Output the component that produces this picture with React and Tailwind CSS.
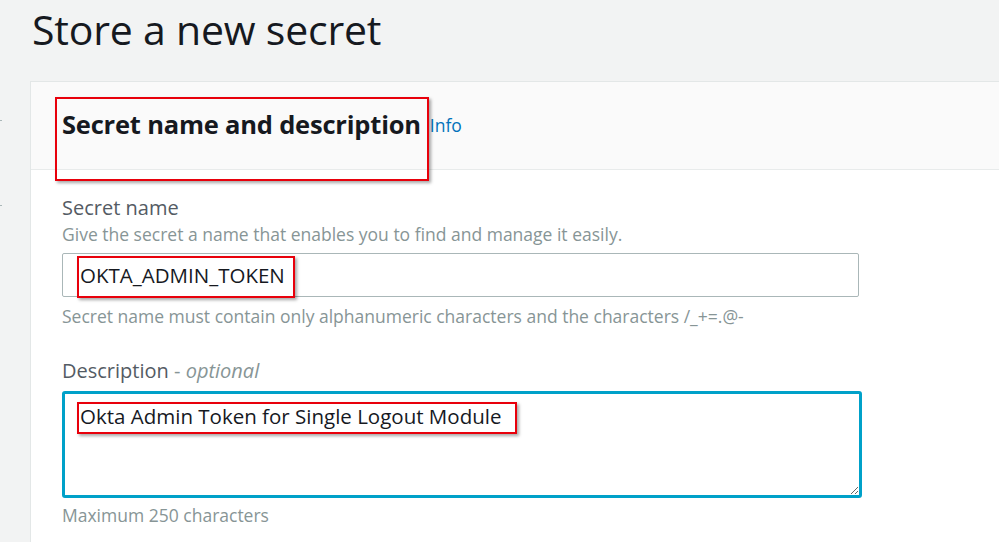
export default function App() {
  const font = { fontFamily: '"Open Sans", "Noto Sans", sans-serif' };
  const redBox = "absolute border-2 border-[#e8000b] shadow-[2px_2px_3px_rgba(0,0,0,0.35)] pointer-events-none";
  return (
    <div className="relative w-[999px] h-[542px] overflow-hidden bg-[#f2f3f3]" style={font}>
      <div className="absolute left-0 top-[120px] w-[2px] h-[1px] bg-[#aab7b8]" />
      <div className="absolute left-0 top-[205px] w-[2px] h-[1px] bg-[#aab7b8]" />

      <h1 className="pl-[32px] pt-[5px] h-[81px] text-[41px] leading-[48px] text-[#16191f] font-normal tracking-[-0.2px]">
        Store a new secret
      </h1>

      <div className="ml-[30px] w-[1000px] h-[470px] bg-white border-l border-t border-[#e3e7e7]">
        <div className="relative h-[88px] bg-[#fafafa] border-b border-[#e8ebeb] flex items-center pl-[31px] pb-[4px]">
          <h2 className="text-[25.5px] leading-[32px] font-bold text-[#16191f] tracking-[-0.2px]">
            Secret name and description
          </h2>
          <a className="ml-[9px] mt-[3px] text-[17.5px] leading-[24px] text-[#0073bb]">Info</a>
          <div className={`${redBox} left-[24px] top-[15px] w-[374px] h-[84px]`} />
        </div>

        <div className="pl-[31px] pt-[25px]">
          <div className="text-[20px] leading-[26px] text-[#545b64]">Secret name</div>
          <div className="mt-[1px] text-[17.5px] leading-[24px] text-[#879596]">
            Give the secret a name that enables you to find and manage it easily.
          </div>
          <div className="relative mt-[7px] w-[797px] h-[44px] border border-[#aab7b8] rounded-[2px] flex items-center pl-[17px] text-[20.5px] text-[#16191f]">
            OKTA_ADMIN_TOKEN
            <div className={`${redBox} left-[14px] top-[2px] w-[218px] h-[42px]`} />
          </div>
          <div className="mt-[7px] text-[17.5px] leading-[24px] text-[#879596]">
            Secret name must contain only alphanumeric characters and the characters /_+=.@-
          </div>

          <div className="mt-[30px] text-[20px] leading-[26px] text-[#545b64]">
            Description <span className="text-[#879596]">-</span>{" "}
            <span className="italic text-[#879596]">optional</span>
          </div>
          <div className="relative mt-[7px] w-[800px] h-[107px]">
            <textarea
              readOnly
              defaultValue="Okta Admin Token for Single Logout Module"
              className="block w-full h-full border-[3px] border-[#00a1c9] rounded-[3px] bg-white pl-[15px] pt-[7px] text-[20.5px] leading-[30px] text-[#16191f] outline-none resize-y"
              style={font}
            />
            <div className={`${redBox} left-[15px] top-[11px] w-[440px] h-[32px]`} />
          </div>
          <div className="mt-[5px] text-[17.5px] leading-[24px] text-[#879596]">Maximum 250 characters</div>
        </div>
      </div>
    </div>
  );
}
